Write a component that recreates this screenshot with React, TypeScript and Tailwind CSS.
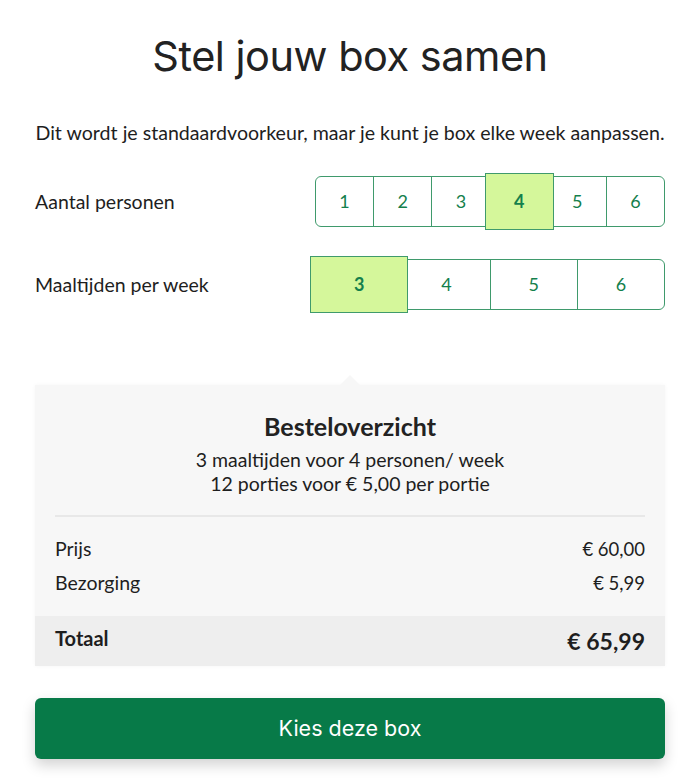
import React from "react";

const body = { fontFamily: "Lato, 'Noto Sans', sans-serif" };
const head = { fontFamily: "Inter, 'Noto Sans', sans-serif" };

function Segmented({ items, selected }: { items: string[]; selected: string }) {
  return (
    <div className="flex w-[350px] h-[51px] rounded-[6px] border border-[#3f9a6c] bg-white">
      {items.map((it, i) => {
        const sel = it === selected;
        return (
          <div
            key={it}
            className={`relative flex-1 flex items-center justify-center text-[18px] text-[#14804c] ${
              i > 0 ? "border-l border-[#3f9a6c]" : ""
            }`}
          >
            {sel ? (
              <div className="absolute -left-[6px] -right-[6px] -top-[4px] -bottom-[4px] z-10 flex items-center justify-center bg-[#d5f79b] border border-[#3f9a6c] font-bold text-[#14804c]">
                {it}
              </div>
            ) : (
              it
            )}
          </div>
        );
      })}
    </div>
  );
}

export default function App() {
  return (
    <div className="w-[700px] h-[783px] bg-white text-[#1e1e1e] overflow-hidden" style={body}>
      <div className="px-[35px]">
        <h1 className="pt-[30px] text-center text-[41.5px] leading-[52px] tracking-[-0.5px] text-[#222]" style={head}>
          Stel jouw box samen
        </h1>
        <p className="mt-[38px] text-center text-[19.6px] leading-[26px] text-[#1e1e1e] whitespace-nowrap">
          Dit wordt je standaardvoorkeur, maar je kunt je box elke week aanpassen.
        </p>

        <div className="mt-[30px] flex items-center justify-between">
          <span className="text-[19.5px]">Aantal personen</span>
          <Segmented items={["1", "2", "3", "4", "5", "6"]} selected="4" />
        </div>
        <div className="mt-[32px] flex items-center justify-between">
          <span className="text-[19.5px]">Maaltijden per week</span>
          <Segmented items={["3", "4", "5", "6"]} selected="3" />
        </div>

        <div className="relative mt-[75px] bg-[#f7f7f7] shadow-[0_0_4px_rgba(0,0,0,0.04)]">
          <div className="absolute left-[305px] -top-[10px] w-0 h-0 border-l-[10px] border-r-[10px] border-b-[10px] border-l-transparent border-r-transparent border-b-[#f7f7f7]" />
          <div className="pt-[25px] text-center">
            <div className="text-[25px] font-bold leading-[32px] text-[#222]">Besteloverzicht</div>
            <div className="mt-[6px] text-[19.5px] leading-[24px]">3 maaltijden voor 4 personen/ week</div>
            <div className="text-[19.5px] leading-[24px]">12 porties voor € 5,00 per portie</div>
          </div>
          <div className="mx-[20px] mt-[19px] h-[2px] bg-[#e8e8e8]" />
          <div className="px-[20px] pt-[19px] pb-[20px]">
            <div className="flex justify-between text-[19.5px] leading-[26px]">
              <span>Prijs</span>
              <span className="text-[18.5px]">€ 60,00</span>
            </div>
            <div className="mt-[8px] flex justify-between text-[19.5px] leading-[26px]">
              <span>Bezorging</span>
              <span className="text-[18.5px]">€ 5,99</span>
            </div>
          </div>
          <div className="flex h-[50px] items-center justify-between bg-[#eeeeee] px-[20px]">
            <span className="text-[20px] font-bold -mt-[6px]">Totaal</span>
            <span className="text-[23px] font-bold">€ 65,99</span>
          </div>
        </div>

        <button
          className="mt-[32px] flex h-[61px] w-full items-center justify-center rounded-[6px] bg-[#077a48] text-[21.5px] text-white shadow-[0_6px_14px_rgba(0,0,0,0.18)]"
          style={head}
        >
          Kies deze box
        </button>
      </div>
    </div>
  );
}
